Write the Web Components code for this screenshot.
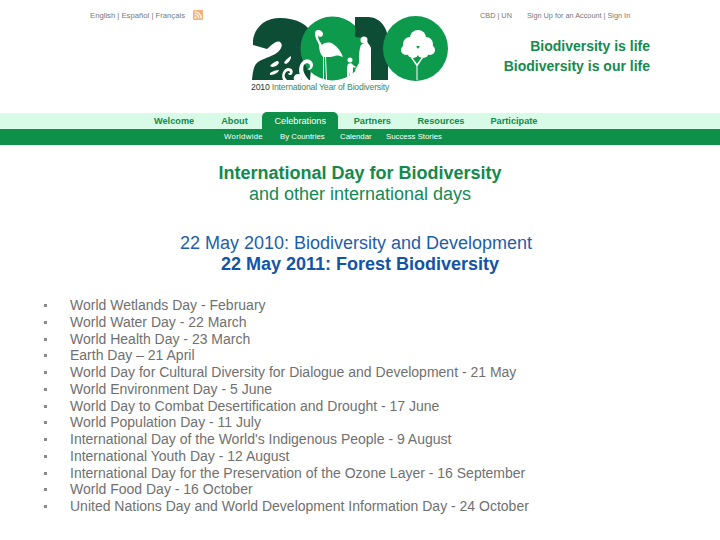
<!DOCTYPE html>
<html>
<head>
<meta charset="utf-8">
<title>International Day for Biodiversity</title>
<style>
  html,body{margin:0;padding:0;background:#fff}
  body{font-family:"Liberation Sans",Arial,sans-serif;overflow:hidden;height:540px}
</style>
</head>
<body>
<cbd-header></cbd-header>
<cbd-nav></cbd-nav>
<day-headings></day-headings>
<day-list>
  <li>World Wetlands Day - February</li>
  <li>World Water Day - 22 March</li>
  <li>World Health Day - 23 March</li>
  <li>Earth Day – 21 April</li>
  <li>World Day for Cultural Diversity for Dialogue and Development - 21 May</li>
  <li>World Environment Day - 5 June</li>
  <li>World Day to Combat Desertification and Drought - 17 June</li>
  <li>World Population Day - 11 July</li>
  <li>International Day of the World's Indigenous People - 9 August</li>
  <li>International Youth Day - 12 August</li>
  <li>International Day for the Preservation of the Ozone Layer - 16 September</li>
  <li>World Food Day - 16 October</li>
  <li>United Nations Day and World Development Information Day - 24 October</li>
</day-list>
<script>
// header: language links, logo, account links and slogan
customElements.define('cbd-header', class extends HTMLElement{
  constructor(){
    super(); this.attachShadow({mode:'open'});
    this.shadowRoot.innerHTML = `
      <style>
        :host{display:grid;grid-template-columns:250px 198px 1fr;height:113px;box-sizing:border-box;color:#777}
        .left{display:flex;align-items:flex-start;padding:11px 0 0 90px;font-size:7.7px;line-height:10px;white-space:nowrap}
        .rss{margin-left:8px;margin-top:-1px}
        .logo{padding-top:15px}
        .right{padding:11px 70px 0 32px;font-size:7.3px;line-height:10px;white-space:nowrap}
        .links{display:flex;gap:15px}
        .slogan{margin-top:15px;text-align:right;color:#168a4c;font-weight:bold;font-size:14px;line-height:20px}
      </style>
      <div class="left"><span>English | Español | Français</span>
        <svg class="rss" width="10" height="10" viewBox="0 0 10 10"><rect width="10" height="10" rx="1" fill="#f4b27a"/><circle cx="2.5" cy="7.5" r="1.1" fill="#fff"/><path d="M1.5 4.2a4.3 4.3 0 0 1 4.3 4.3M1.5 1.8a6.7 6.7 0 0 1 6.7 6.7" fill="none" stroke="#fff" stroke-width="1.1"/></svg>
      </div>
      <div class="logo"><year-logo></year-logo></div>
      <div class="right">
        <div class="links"><span>CBD | UN</span><span>Sign Up for an Account | Sign In</span></div>
        <div class="slogan">Biodiversity is life<br>Biodiversity is our life</div>
      </div>`;
  }
});

customElements.define('year-logo', class extends HTMLElement{
  constructor(){
    super(); this.attachShadow({mode:'open'});
    this.shadowRoot.innerHTML = `
      <style>
        :host{display:block;width:198px;height:80px;position:relative}
        svg{display:block}
        span{position:absolute;left:1px;top:67px;font-size:8.7px;line-height:11px;color:#3b8a5e;white-space:nowrap;letter-spacing:-.2px}
        b{font-weight:normal;color:#1c3a2c}
      </style>
      <svg width="198" height="67" viewBox="250 15 198 67">
        <path fill="#0d4d36" d="M253 40C255 27 265 18 280 18C296 18 308 24 314 36L310 80L252 80C253 70 254 65 258 62C266 57 274 56 278 52C282 48 283 44 280 42C276 40 272 45 267 49L253 45Z"/>
        <circle cx="332.500" cy="48.500" r="32" fill="#0e9a4c"/>
        <path fill="#0d4d36" d="M355 17H368C380 17 388 28 388 40V80H371V48L365 38L355 37Z"/>
        <circle cx="415.500" cy="48.500" r="32.500" fill="#0e9a4c"/>
        <!-- fish -->
        <path fill="#fff" d="M270 66c2-3 6-5 8-5l1 2c-2 3-5 4-7 4zM284 63c1-3 4-5 7-7l0 2c-1 3-3 5-5 6zM270 73c3-2 6-3 9-3l-1 2c-2 2-5 3-8 3z"/>
        <!-- waves -->
        <path fill="#fff" d="M283 80c-2-5 0-11 5-12 4 0 6 3 4 6-1 2-4 1-4-1 1 1 2 0 2-1-1-2-4-1-5 2-1 2 0 4 2 6zM294 80c-1-3 1-6 4-6s4 3 3 5l1 1zM302 80c-4-7-4-15 1-19 4-3 10-1 10 4 0 4-4 6-6 4 2 0 3-1 3-3 0-3-4-4-6-1-2 4 0 10 5 15z"/>
        <!-- flamingo -->
        <path fill="#fff" d="M318 30c3 0 5 2 5 4 0 1-1 3-3 3-1 0-1-1-1-2-1 1-1 3 0 5l3 5c3-3 8-3 11-1 5 3 8 8 10 13-3-1-6-2-8-1-3 1-6 1-9 1l1 23h-1l-1-23h-1l0 23h-1l0-23c-3-3-4-8-4-12-1-3-4-7-4-11 0-3 1-4 3-4z"/>
        <!-- person with child -->
        <circle cx="364" cy="40" r="3.500" fill="#fff"/>
        <path fill="#fff" d="M361 45c3-2 7-2 9 1 1 2 1 8 1 14v20h-11V66l-4 5-1-1 4-7c0-6 0-14 2-18z"/>
        <circle cx="350" cy="60" r="2.500" fill="#fff"/>
        <path fill="#fff" d="M348 64c2-1 4-1 5 1l3 2-1 1-2-1 0 4-1 6h-2l0-5-1 5h-2l0-6c0-3 0-5 1-7z"/>
        <!-- tree -->
        <g fill="#fff">
          <circle cx="418" cy="38" r="8"/><circle cx="410" cy="44" r="7"/><circle cx="426" cy="44" r="7"/>
          <circle cx="406" cy="50" r="5"/><circle cx="430" cy="50" r="5"/><circle cx="413" cy="52" r="6"/><circle cx="423" cy="52" r="6"/>
          <path d="M416.500 80V66L411 58l1-1 5 7 5-7 1 1-5.500 8v14z"/>
        </g>
      </svg>
      <span><b>2010</b> International Year of Biodiversity</span>`;
  }
});

customElements.define('cbd-nav', class extends HTMLElement{
  constructor(){
    super(); this.attachShadow({mode:'open'});
    this.shadowRoot.innerHTML = `
      <style>
        :host{display:block;font-size:9.200px}
        .top{height:16px;background:#d7fbe6;padding-left:140.500px;display:flex;color:#128a48;font-weight:bold;line-height:16px}
        .top span{padding:0 13.500px;white-space:nowrap}
        .top .about{padding-right:14.500px}
        .top .on{background:#0e8f4a;color:#fff;border-radius:5px 5px 0 0;height:17px;margin-top:-1px;padding:1px 0 0;width:76px;box-sizing:border-box;text-align:center;font-weight:normal}
        .top .partners{padding-left:15.500px}
        .top .res{padding-left:13px;padding-right:12.500px}
        .sub{height:16px;background:#0e8f4a;color:#fff;padding-left:224px;display:grid;grid-template-columns:56px 60px 46px auto;font-size:7.800px;line-height:16px}
        .sub span:first-child{letter-spacing:.3px}
      </style>
      <div class="top"><span>Welcome</span><span class="about">About</span><span class="on">Celebrations</span><span class="partners">Partners</span><span class="res">Resources</span><span>Participate</span></div>
      <div class="sub"><span>Worldwide</span><span>By Countries</span><span>Calendar</span><span>Success Stories</span></div>`;
  }
});

customElements.define('day-headings', class extends HTMLElement{
  constructor(){
    super(); this.attachShadow({mode:'open'});
    this.shadowRoot.innerHTML = `
      <style>
        :host{display:block;text-align:center;font-size:18px;line-height:21.500px;padding-top:17.500px;color:#128a56}
        p{margin:0}
        .two{margin-top:27px;color:#1d5ea8}
        .two b{color:#1254a6}
        .two span{margin-right:8px}
        b{font-weight:bold;color:#128a4c}
      </style>
      <p><b>International Day for Biodiversity</b><br>and other international days</p>
      <p class="two"><span>22 May 2010: Biodiversity and Development</span><br><b>22 May 2011: Forest Biodiversity</b></p>`;
  }
});

customElements.define('day-list', class extends HTMLElement{
  constructor(){
    super(); this.attachShadow({mode:'open'});
    this.shadowRoot.innerHTML = `
      <style>
        :host{display:block;margin-top:21.500px;padding-left:70px;font-size:14px;line-height:16.75px;color:#707070}
        ul{margin:0;padding:0;list-style:none}
        ::slotted(li){list-style:none;position:relative;white-space:nowrap}
        ::slotted(li)::before{content:"";position:absolute;left:-26px;top:7px;width:3px;height:3px;background:#8a8a8a}
      </style>
      <ul><slot></slot></ul>`;
  }
});
</script>
</body>
</html>
